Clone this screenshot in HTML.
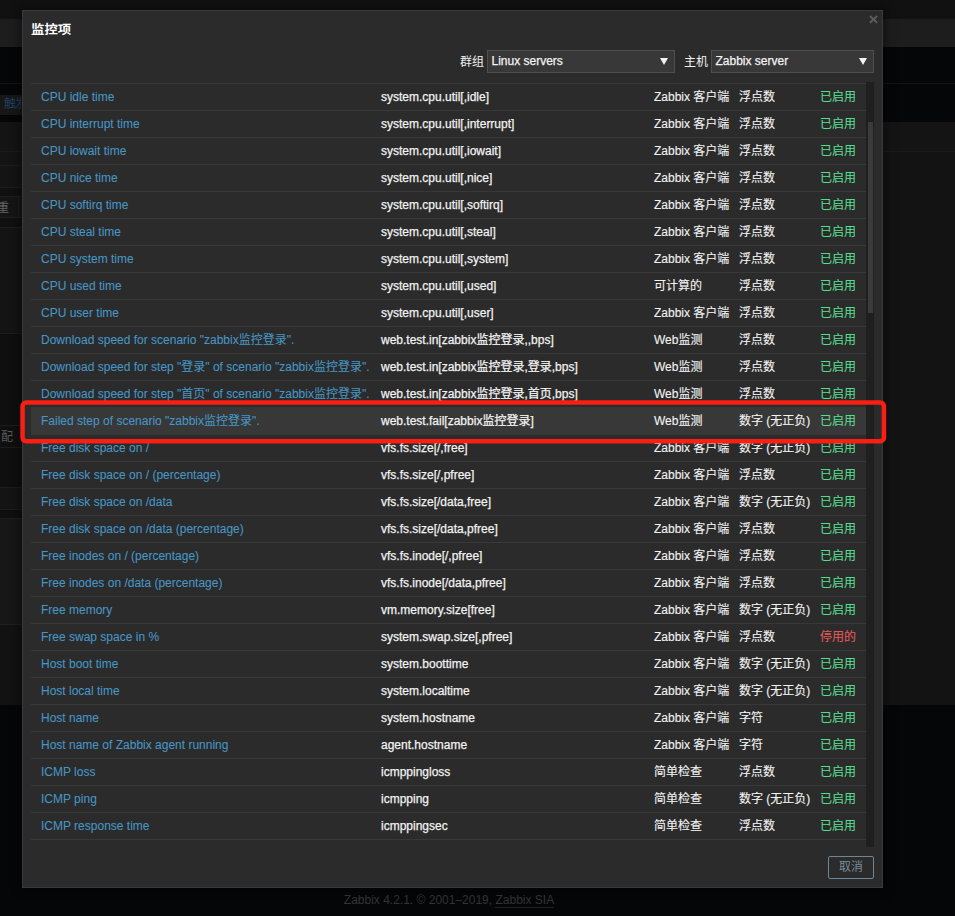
<!DOCTYPE html>
<html lang="zh-CN">
<head>
<meta charset="utf-8">
<title>监控项</title>
<style>
html,body{margin:0;padding:0;}
body{width:955px;height:916px;overflow:hidden;background:#111;position:relative;
 font-family:"Liberation Sans","Noto Sans CJK SC",sans-serif;font-size:12px;color:#f2f2f2;}
.bg{position:absolute;left:0;width:955px;}
.ln{position:absolute;left:0;width:955px;height:1px;}
#modal{position:absolute;left:22px;top:10px;width:859px;height:876px;background:#2b2b2b;border:1px solid #3a3a3a;
 box-shadow:0 0 10px 2px rgba(0,0,0,.45);}
#title{position:absolute;left:8px;top:9px;font-size:13.4px;font-weight:bold;line-height:20px;color:#fff;transform:scaleY(.92);transform-origin:0 17px;}
#close{position:absolute;left:845px;top:3px;width:12px;height:12px;}
.lbl{position:absolute;top:40px;line-height:22px;height:22px;color:#f2f2f2;}
.sel{position:absolute;top:39px;height:21px;background:#383838;border:1px solid #4f4f4f;line-height:21px;padding-left:3.5px;box-sizing:content-box;color:#f2f2f2;}
.sel i{position:absolute;right:6px;top:7px;width:0;height:0;border-left:4.2px solid transparent;border-right:4.2px solid transparent;border-top:7.5px solid #f2f2f2;}
#list{position:absolute;left:8px;top:72px;width:835px;height:764px;overflow:hidden;}
#sbar{position:absolute;left:843px;top:71px;width:8px;height:765px;background:#1f1f1f;}
#sbar b{position:absolute;left:1.5px;top:40px;width:5px;height:191px;background:#3b3b3b;}
table{border-collapse:collapse;width:835px;table-layout:fixed;}
td{height:26px;padding:0;border-top:1px solid #383838;border-bottom:1px solid #383838;line-height:14px;vertical-align:middle;white-space:nowrap;overflow:visible;}
td.n{width:350px;padding-left:10px;box-sizing:border-box;}
td.k{width:273px;}
td.k,.sel{-webkit-text-stroke:0.25px #f2f2f2;}
td.t,td.i{-webkit-text-stroke:0.12px #f2f2f2;}
td.t{width:85px;}
td.i{width:81px;}
a{color:#4796c4;-webkit-text-stroke:0.08px #4796c4;}
.on{color:#59db8f;-webkit-text-stroke:0.1px #59db8f;}
.off{color:#e45959;-webkit-text-stroke:0.1px #e45959;}
tr.hl td{background:#383838;}
tr.last td{padding-top:3px;}
#cancel{position:absolute;left:805px;top:845px;width:44px;height:21px;border:1px solid #6c8698;border-radius:2px;color:#768d99;text-align:center;line-height:21px;}
#red{position:absolute;left:0;top:0;width:955px;height:916px;pointer-events:none;}
#foot{position:absolute;left:0;width:898px;top:893px;text-align:center;color:#343434;line-height:14px;}
#foot span{border-bottom:1px solid #202020;padding-bottom:0px;}
</style>
</head>
<body>
<!-- dimmed page behind -->
<div class="bg" style="top:0;height:19px;background:#111111"></div>
<div class="bg" style="top:19px;height:28px;background:#1d1d1d"></div>
<div class="bg" style="top:47px;height:75px;background:#050607"></div>
<div class="ln" style="top:83px;background:#141414"></div>
<div class="bg" style="top:95px;height:20px;width:22px;background:#171717"></div>
<div style="position:absolute;left:4px;top:96px;line-height:16px;letter-spacing:-1px;color:#1d415f;white-space:nowrap;width:17px;overflow:hidden">触发器</div>
<div class="bg" style="top:122px;height:583px;background:#141414"></div>
<div class="ln" style="top:151px;background:#1b1b1b"></div>
<div class="bg" style="top:152px;height:553px;left:883px;width:72px;background:#131313"></div>
<!-- left column details -->
<div class="bg" style="top:165px;height:1px;width:22px;background:#1d1d1d"></div>
<div class="bg" style="top:187px;height:40px;width:22px;background:#101010"></div>
<div class="bg" style="top:187px;height:1px;width:22px;background:#1d1d1d"></div>
<div class="bg" style="top:196px;height:22px;width:22px;background:#151515;border-top:1px solid #1f1f1f;border-bottom:1px solid #1f1f1f;box-sizing:border-box"></div><div class="bg" style="top:196px;height:22px;left:18px;width:1px;background:#1f1f1f"></div>
<div style="position:absolute;left:-3px;top:200px;line-height:16px;color:#666;">重</div>
<div class="bg" style="top:227px;height:1px;width:22px;background:#1d1d1d"></div>
<div class="bg" style="top:333px;height:154px;width:22px;background:#0f0f0f"></div>
<div class="bg" style="top:333px;height:1px;width:22px;background:#1c1c1c"></div>
<div class="bg" style="top:425px;height:1px;width:22px;background:#1c1c1c"></div>
<div style="position:absolute;left:1px;top:429px;line-height:16px;color:#5a5a5a;">配</div>
<div class="bg" style="top:447px;height:1px;width:22px;background:#1c1c1c"></div>
<div class="bg" style="top:487px;height:1px;width:22px;background:#1c1c1c"></div>
<div class="bg" style="top:509px;height:10px;width:22px;background:#0f0f0f"></div>
<div class="bg" style="top:509px;height:1px;width:22px;background:#1c1c1c"></div>
<div class="bg" style="top:518px;height:106px;width:22px;background:#171717"></div>
<div class="bg" style="top:518px;height:1px;width:22px;background:#1f1f1f"></div>
<div class="bg" style="top:624px;height:81px;width:22px;background:#121212"></div>
<div class="bg" style="top:624px;height:1px;width:22px;background:#1f1f1f"></div>
<div class="bg" style="top:705px;height:211px;background:#050608"></div>
<div id="foot">Zabbix 4.2.1. © 2001–2019, <span>Zabbix SIA</span></div>

<div id="modal">
 <div id="title">监控项</div>
 <svg id="close" width="12" height="12" viewBox="0 0 12 12"><path d="M1.9 2.0 L9.1 8.8 M9.1 2.0 L1.9 8.8" stroke="#5c5c5c" stroke-width="1.9" fill="none"/></svg>
 <div class="lbl" style="left:437px">群组</div>
 <div class="sel" style="left:464px;width:182px">Linux servers<i></i></div>
 <div class="lbl" style="left:661px">主机</div>
 <div class="sel" style="left:688px;width:157px">Zabbix server<i></i></div>
 <div id="list">
 <table>
<tr><td class="n"><a>CPU idle time</a></td><td class="k">system.cpu.util[,idle]</td><td class="t">Zabbix 客户端</td><td class="i">浮点数</td><td class="on">已启用</td></tr>
<tr><td class="n"><a>CPU interrupt time</a></td><td class="k">system.cpu.util[,interrupt]</td><td class="t">Zabbix 客户端</td><td class="i">浮点数</td><td class="on">已启用</td></tr>
<tr><td class="n"><a>CPU iowait time</a></td><td class="k">system.cpu.util[,iowait]</td><td class="t">Zabbix 客户端</td><td class="i">浮点数</td><td class="on">已启用</td></tr>
<tr><td class="n"><a>CPU nice time</a></td><td class="k">system.cpu.util[,nice]</td><td class="t">Zabbix 客户端</td><td class="i">浮点数</td><td class="on">已启用</td></tr>
<tr><td class="n"><a>CPU softirq time</a></td><td class="k">system.cpu.util[,softirq]</td><td class="t">Zabbix 客户端</td><td class="i">浮点数</td><td class="on">已启用</td></tr>
<tr><td class="n"><a>CPU steal time</a></td><td class="k">system.cpu.util[,steal]</td><td class="t">Zabbix 客户端</td><td class="i">浮点数</td><td class="on">已启用</td></tr>
<tr><td class="n"><a>CPU system time</a></td><td class="k">system.cpu.util[,system]</td><td class="t">Zabbix 客户端</td><td class="i">浮点数</td><td class="on">已启用</td></tr>
<tr><td class="n"><a>CPU used time</a></td><td class="k">system.cpu.util[,used]</td><td class="t">可计算的</td><td class="i">浮点数</td><td class="on">已启用</td></tr>
<tr><td class="n"><a>CPU user time</a></td><td class="k">system.cpu.util[,user]</td><td class="t">Zabbix 客户端</td><td class="i">浮点数</td><td class="on">已启用</td></tr>
<tr><td class="n"><a>Download speed for scenario "zabbix监控登录".</a></td><td class="k">web.test.in[zabbix监控登录,,bps]</td><td class="t">Web监测</td><td class="i">浮点数</td><td class="on">已启用</td></tr>
<tr><td class="n"><a>Download speed for step "登录" of scenario "zabbix监控登录".</a></td><td class="k">web.test.in[zabbix监控登录,登录,bps]</td><td class="t">Web监测</td><td class="i">浮点数</td><td class="on">已启用</td></tr>
<tr><td class="n"><a>Download speed for step "首页" of scenario "zabbix监控登录".</a></td><td class="k">web.test.in[zabbix监控登录,首页,bps]</td><td class="t">Web监测</td><td class="i">浮点数</td><td class="on">已启用</td></tr>
<tr class="hl"><td class="n"><a>Failed step of scenario "zabbix监控登录".</a></td><td class="k">web.test.fail[zabbix监控登录]</td><td class="t">Web监测</td><td class="i">数字 (无正负)</td><td class="on">已启用</td></tr>
<tr><td class="n"><a>Free disk space on /</a></td><td class="k">vfs.fs.size[/,free]</td><td class="t">Zabbix 客户端</td><td class="i">数字 (无正负)</td><td class="on">已启用</td></tr>
<tr><td class="n"><a>Free disk space on / (percentage)</a></td><td class="k">vfs.fs.size[/,pfree]</td><td class="t">Zabbix 客户端</td><td class="i">浮点数</td><td class="on">已启用</td></tr>
<tr><td class="n"><a>Free disk space on /data</a></td><td class="k">vfs.fs.size[/data,free]</td><td class="t">Zabbix 客户端</td><td class="i">数字 (无正负)</td><td class="on">已启用</td></tr>
<tr><td class="n"><a>Free disk space on /data (percentage)</a></td><td class="k">vfs.fs.size[/data,pfree]</td><td class="t">Zabbix 客户端</td><td class="i">浮点数</td><td class="on">已启用</td></tr>
<tr><td class="n"><a>Free inodes on / (percentage)</a></td><td class="k">vfs.fs.inode[/,pfree]</td><td class="t">Zabbix 客户端</td><td class="i">浮点数</td><td class="on">已启用</td></tr>
<tr><td class="n"><a>Free inodes on /data (percentage)</a></td><td class="k">vfs.fs.inode[/data,pfree]</td><td class="t">Zabbix 客户端</td><td class="i">浮点数</td><td class="on">已启用</td></tr>
<tr><td class="n"><a>Free memory</a></td><td class="k">vm.memory.size[free]</td><td class="t">Zabbix 客户端</td><td class="i">数字 (无正负)</td><td class="on">已启用</td></tr>
<tr><td class="n"><a>Free swap space in %</a></td><td class="k">system.swap.size[,pfree]</td><td class="t">Zabbix 客户端</td><td class="i">浮点数</td><td class="off">停用的</td></tr>
<tr><td class="n"><a>Host boot time</a></td><td class="k">system.boottime</td><td class="t">Zabbix 客户端</td><td class="i">数字 (无正负)</td><td class="on">已启用</td></tr>
<tr><td class="n"><a>Host local time</a></td><td class="k">system.localtime</td><td class="t">Zabbix 客户端</td><td class="i">数字 (无正负)</td><td class="on">已启用</td></tr>
<tr><td class="n"><a>Host name</a></td><td class="k">system.hostname</td><td class="t">Zabbix 客户端</td><td class="i">字符</td><td class="on">已启用</td></tr>
<tr><td class="n"><a>Host name of Zabbix agent running</a></td><td class="k">agent.hostname</td><td class="t">Zabbix 客户端</td><td class="i">字符</td><td class="on">已启用</td></tr>
<tr><td class="n"><a>ICMP loss</a></td><td class="k">icmppingloss</td><td class="t">简单检查</td><td class="i">浮点数</td><td class="on">已启用</td></tr>
<tr><td class="n"><a>ICMP ping</a></td><td class="k">icmpping</td><td class="t">简单检查</td><td class="i">数字 (无正负)</td><td class="on">已启用</td></tr>
<tr><td class="n"><a>ICMP response time</a></td><td class="k">icmppingsec</td><td class="t">简单检查</td><td class="i">浮点数</td><td class="on">已启用</td></tr>
<tr class="last"><td class="n"><a>Incoming network traffic on eth0</a></td><td class="k">net.if.in[eth0]</td><td class="t">Zabbix 客户端</td><td class="i">浮点数</td><td class="on">已启用</td></tr>
 </table>
 </div>
 <div id="sbar"><b></b></div>
 <div id="cancel">取消</div>
</div>
<svg id="red" width="955" height="916" viewBox="0 0 955 916"><rect x="22.55" y="402.55" width="861.4" height="38.7" rx="3.7" ry="3.7" fill="none" stroke="#fa1f13" stroke-width="4.5"/></svg>
</body>
</html>
